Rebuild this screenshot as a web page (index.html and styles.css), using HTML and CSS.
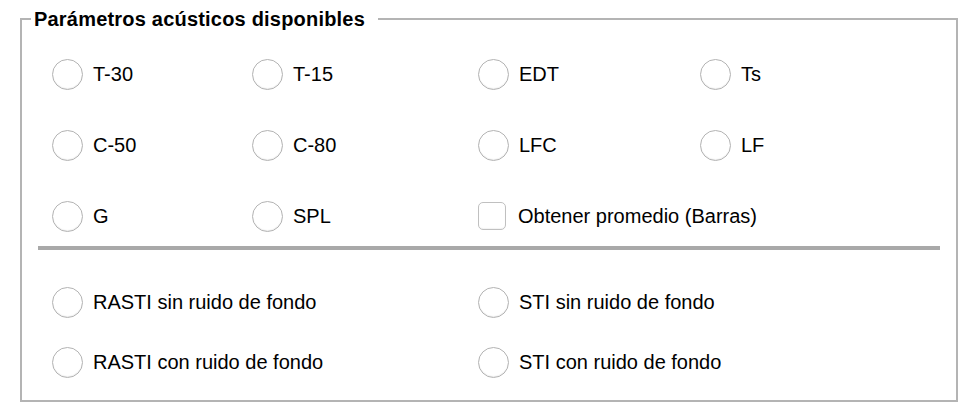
FILE: index.html
```html
<!DOCTYPE html>
<html lang="es">
<head>
<meta charset="utf-8">
<title>Parámetros acústicos</title>
<link rel="stylesheet" href="styles.css">
</head>
<body>
<div class="page">
  <fieldset class="group">
    <legend class="group-title">Parámetros acústicos disponibles</legend>
    <div class="grid-params">
      <label class="opt"><input type="radio" name="param" class="radio"><span>T-30</span></label>
      <label class="opt"><input type="radio" name="param" class="radio"><span>T-15</span></label>
      <label class="opt"><input type="radio" name="param" class="radio"><span>EDT</span></label>
      <label class="opt"><input type="radio" name="param" class="radio"><span>Ts</span></label>
      <label class="opt"><input type="radio" name="param" class="radio"><span>C-50</span></label>
      <label class="opt"><input type="radio" name="param" class="radio"><span>C-80</span></label>
      <label class="opt"><input type="radio" name="param" class="radio"><span>LFC</span></label>
      <label class="opt"><input type="radio" name="param" class="radio"><span>LF</span></label>
      <label class="opt"><input type="radio" name="param" class="radio"><span>G</span></label>
      <label class="opt"><input type="radio" name="param" class="radio"><span>SPL</span></label>
      <label class="opt opt-check span2"><input type="checkbox" class="check"><span>Obtener promedio (Barras)</span></label>
    </div>
    <hr class="divider">
    <div class="grid-speech">
      <label class="opt"><input type="radio" name="param" class="radio"><span>RASTI sin ruido de fondo</span></label>
      <label class="opt"><input type="radio" name="param" class="radio"><span>STI sin ruido de fondo</span></label>
      <label class="opt"><input type="radio" name="param" class="radio"><span>RASTI con ruido de fondo</span></label>
      <label class="opt"><input type="radio" name="param" class="radio"><span>STI con ruido de fondo</span></label>
    </div>
  </fieldset>
</div>
</body>
</html>
```

FILE: styles.css
```css
html, body {
  margin: 0;
  padding: 0;
  background: #ffffff;
}

body {
  font-family: "Liberation Sans", Arial, Helvetica, sans-serif;
  font-size: 20px;
  color: #000000;
}

.page {
  padding: 7px 14px 0 20px;
}

.group {
  margin: 0;
  padding: 0 16px 23px 16px;
  border: 2px solid #b4b4b4;
  min-width: 0;
}

.group-title {
  margin-left: -7px;
  padding: 0 13px 0 3px;
  font-weight: bold;
  font-size: 20px;
  line-height: 24px;
  letter-spacing: 0.2px;
  color: #000000;
}

.grid-params {
  display: grid;
  grid-template-columns: 200px 226px 222px 1fr;
  grid-auto-rows: 30px;
  row-gap: 41px;
  margin: 28px 0 0 14px;
}

.grid-speech {
  display: grid;
  grid-template-columns: 426px 1fr;
  grid-auto-rows: 30px;
  row-gap: 30px;
  margin: 37px 0 0 14px;
}

.opt {
  display: flex;
  align-items: center;
  gap: 10px;
  line-height: 24px;
  white-space: nowrap;
}

.opt-check {
  gap: 12px;
}

.span2 {
  grid-column: span 2;
}

.radio {
  appearance: none;
  -webkit-appearance: none;
  margin: 0;
  width: 31px;
  height: 31px;
  flex: none;
  border-radius: 50%;
  border: 1px solid #b3b3b3;
  background: #ffffff;
  box-shadow: inset 0 -1px 1px rgba(0, 0, 0, 0.07);
}

.check {
  appearance: none;
  -webkit-appearance: none;
  margin: 0;
  width: 28px;
  height: 28px;
  flex: none;
  border-radius: 5px;
  border: 1px solid #c0c0c0;
  background: #ffffff;
  box-shadow: inset 0 -1px 1px rgba(0, 0, 0, 0.05);
}

.divider {
  margin: 15px 0 0 0;
  height: 4px;
  border: 0;
  background: #a9a9a9;
}
```
